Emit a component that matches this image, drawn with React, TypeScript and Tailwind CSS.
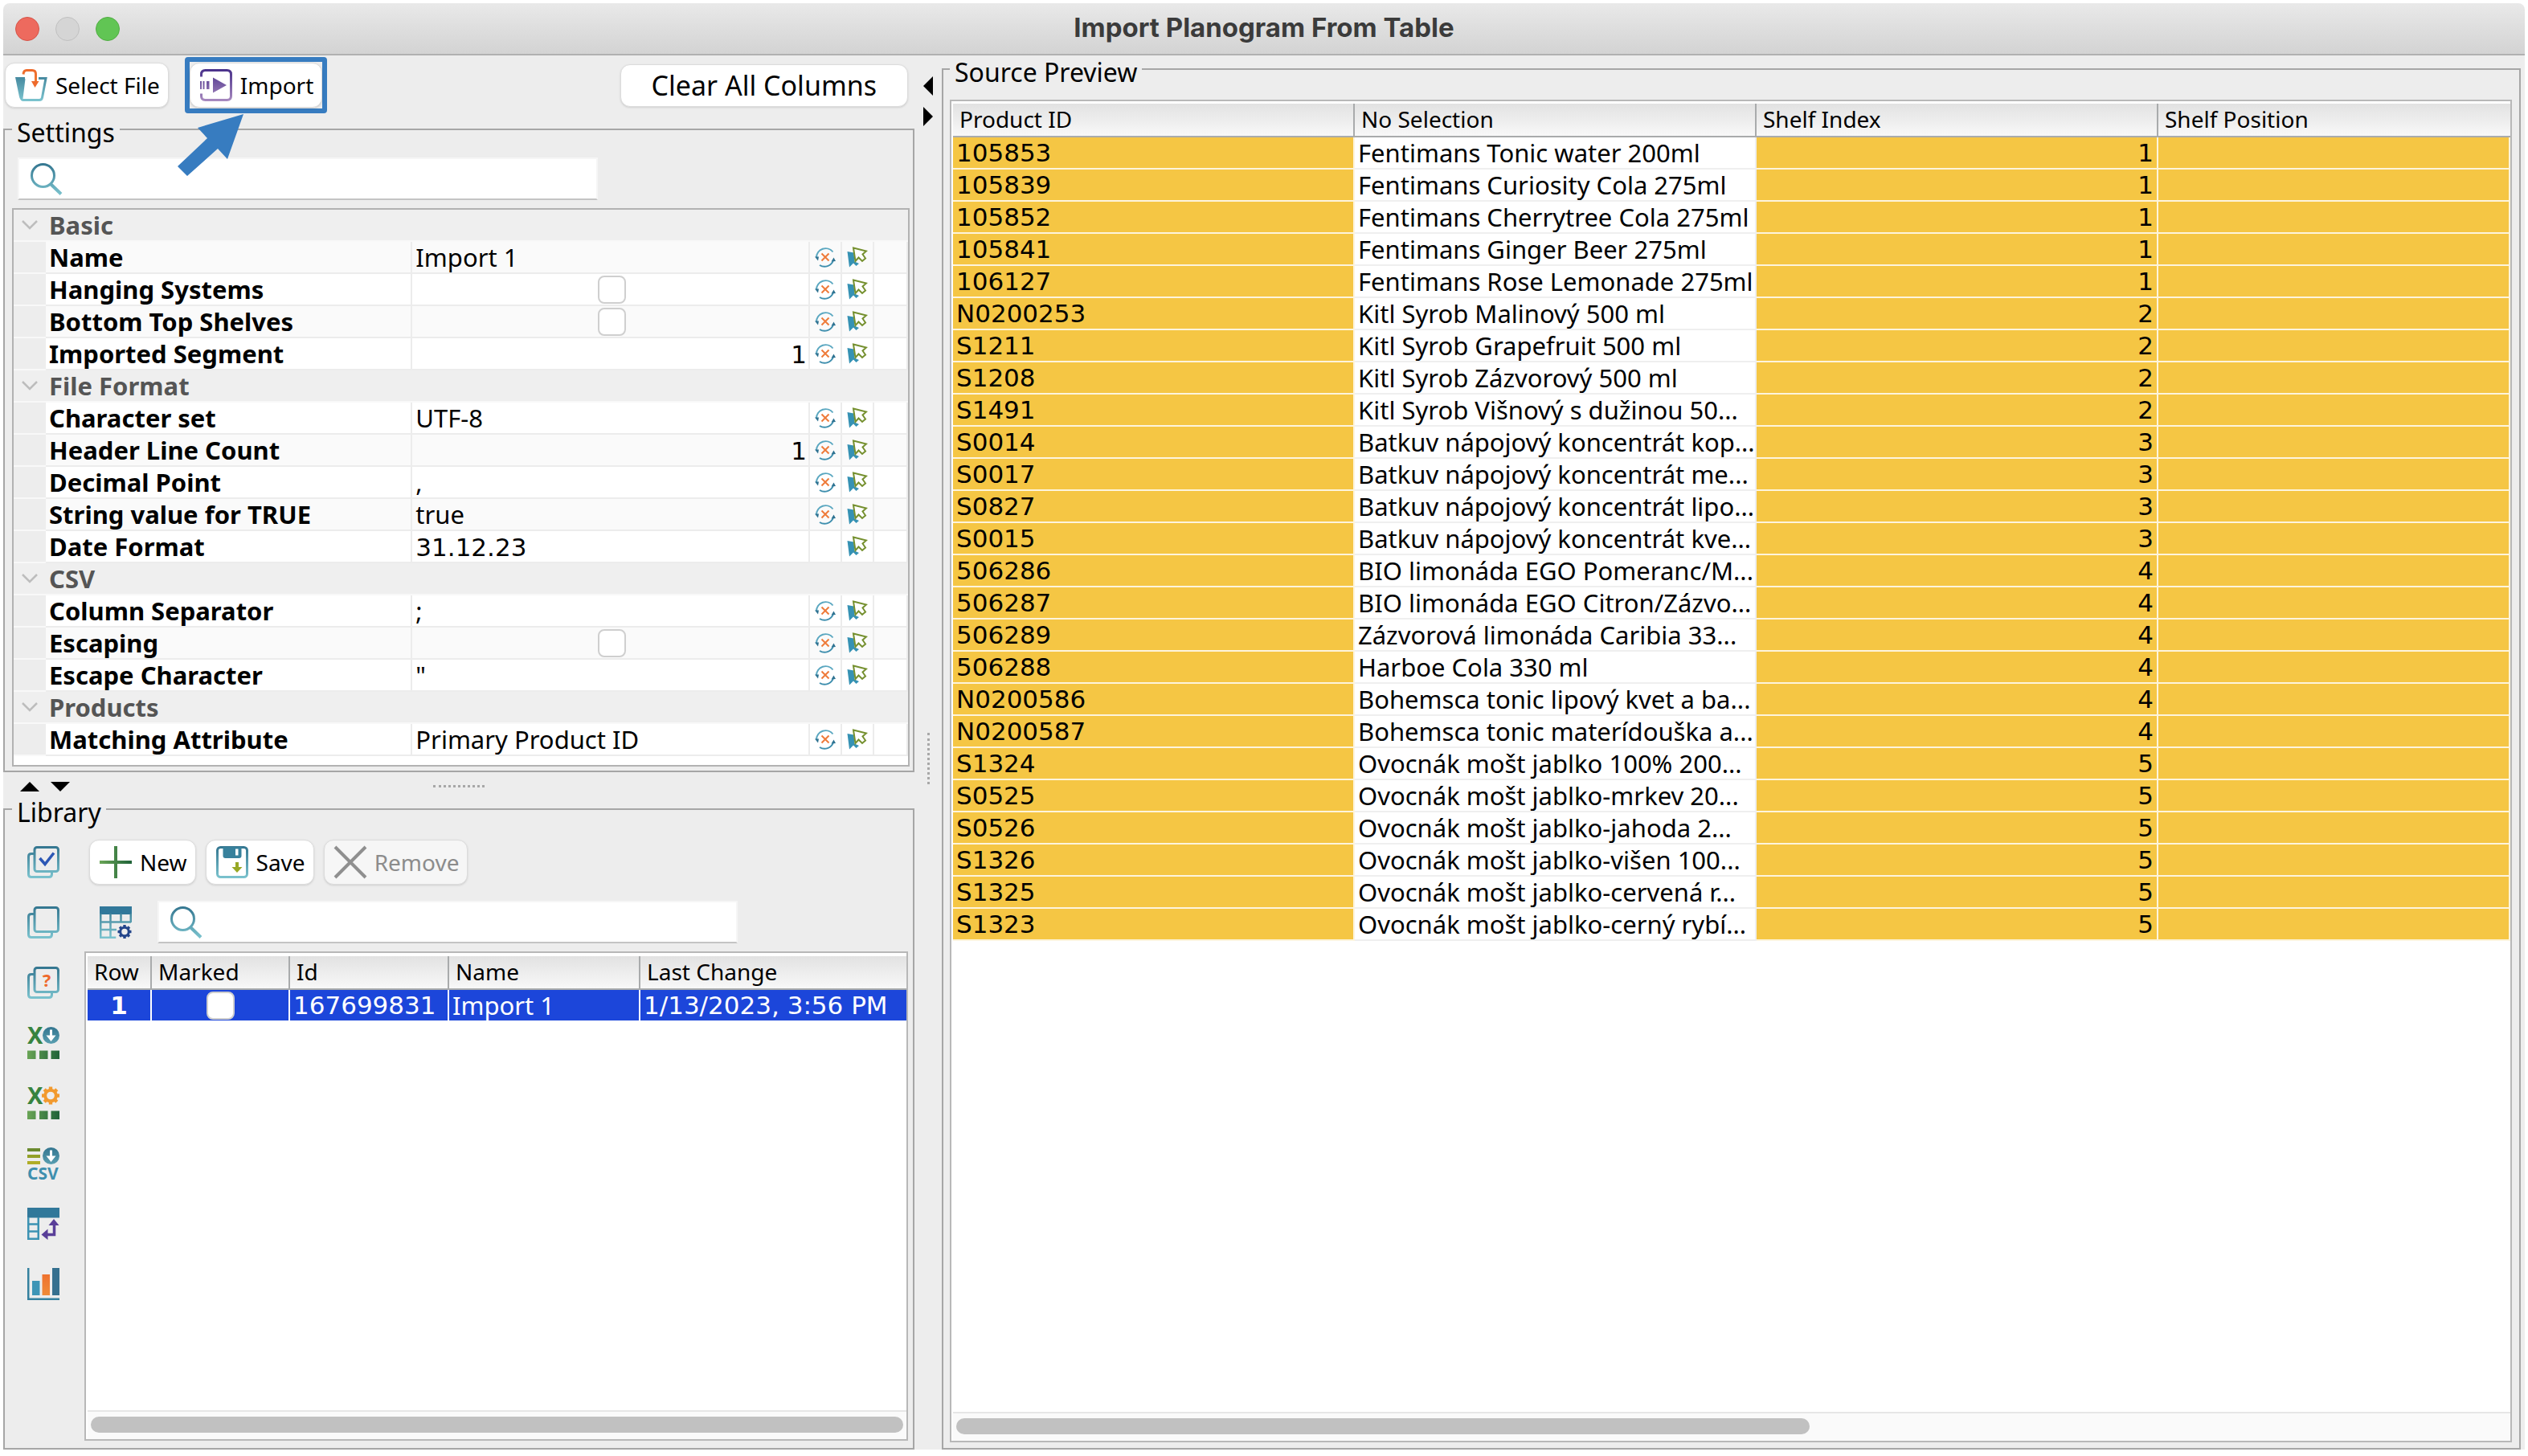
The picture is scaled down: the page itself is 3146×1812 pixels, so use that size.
import type { ReactNode } from "react";

type Prop = {
  label: string;
  value?: string;
  kind?: "group" | "text" | "number" | "check";
  noReset?: boolean;
};

const PROPS: Prop[] = [
  { label: "Basic", kind: "group" },
  { label: "Name", value: "Import 1" },
  { label: "Hanging Systems", kind: "check" },
  { label: "Bottom Top Shelves", kind: "check" },
  { label: "Imported Segment", value: "1", kind: "number" },
  { label: "File Format", kind: "group" },
  { label: "Character set", value: "UTF-8" },
  { label: "Header Line Count", value: "1", kind: "number" },
  { label: "Decimal Point", value: "," },
  { label: "String value for TRUE", value: "true" },
  { label: "Date Format", value: "31.12.23", noReset: true },
  { label: "CSV", kind: "group" },
  { label: "Column Separator", value: ";" },
  { label: "Escaping", kind: "check" },
  { label: "Escape Character", value: '"' },
  { label: "Products", kind: "group" },
  { label: "Matching Attribute", value: "Primary Product ID" },
];

const PRODUCTS: [string, string, number][] = [
  ["105853", "Fentimans Tonic water 200ml", 1],
  ["105839", "Fentimans Curiosity Cola 275ml", 1],
  ["105852", "Fentimans Cherrytree Cola 275ml", 1],
  ["105841", "Fentimans Ginger Beer 275ml", 1],
  ["106127", "Fentimans Rose Lemonade 275ml", 1],
  ["N0200253", "Kitl Syrob Malinový 500 ml", 2],
  ["S1211", "Kitl Syrob Grapefruit 500 ml", 2],
  ["S1208", "Kitl Syrob Zázvorový 500 ml", 2],
  ["S1491", "Kitl Syrob Višnový s dužinou 50...", 2],
  ["S0014", "Batkuv nápojový koncentrát kop...", 3],
  ["S0017", "Batkuv nápojový koncentrát me...", 3],
  ["S0827", "Batkuv nápojový koncentrát lipo...", 3],
  ["S0015", "Batkuv nápojový koncentrát kve...", 3],
  ["506286", "BIO limonáda EGO Pomeranc/M...", 4],
  ["506287", "BIO limonáda EGO Citron/Zázvo...", 4],
  ["506289", "Zázvorová limonáda Caribia 33...", 4],
  ["506288", "Harboe Cola 330 ml", 4],
  ["N0200586", "Bohemsca tonic lipový kvet a ba...", 4],
  ["N0200587", "Bohemsca tonic materídouška a...", 4],
  ["S1324", "Ovocnák mošt jablko 100% 200...", 5],
  ["S0525", "Ovocnák mošt jablko-mrkev 20...", 5],
  ["S0526", "Ovocnák mošt jablko-jahoda 2...", 5],
  ["S1326", "Ovocnák mošt jablko-višen 100...", 5],
  ["S1325", "Ovocnák mošt jablko-cervená r...", 5],
  ["S1323", "Ovocnák mošt jablko-cerný rybí...", 5],
];

// gradients shared by all icons
function Gradients() {
  const stops: [string, string, string, boolean][] = [
    ["teal", "#33758f", "#7cc4cf", false],
    ["green", "#6aa556", "#1f6238", true],
    ["purple", "#48308a", "#a98bc0", false],
    ["orange", "#ee6a2c", "#f0913a", false],
  ];
  return (
    <svg className="absolute size-0" aria-hidden="true">
      <defs>
        {stops.map(([id, from, to, across]) => (
          <linearGradient key={id} id={id} gradientUnits="userSpaceOnUse" x1="0" y1="0" x2={across ? 40 : 0} y2={across ? 0 : 40}>
            <stop offset="0" stopColor={from} />
            <stop offset="1" stopColor={to} />
          </linearGradient>
        ))}
      </defs>
    </svg>
  );
}

function Icon({ children }: { children: ReactNode }) {
  return (
    <svg viewBox="0 0 40 40" className="size-10 shrink-0 overflow-visible" fill="none" aria-hidden="true">
      {children}
    </svg>
  );
}

function SelectFileIcon() {
  return (
    <Icon>
      <path d="M0 10h12v3l-1.500 1 -2.500 24.500c-1.500-.5-2.500-1.500-3-4z" fill="url(#teal)" />
      <path d="M11 12l-3 24.500q-.3 2 2 2h20q3 0 3.500-3l4.500-24h-9" stroke="url(#teal)" strokeWidth="3" />
      <path d="M10 6.500q.5-5 4-5h7q4.500 0 4.500 4.500v11" stroke="url(#orange)" strokeWidth="3" />
      <path d="M20 15l4.500 8 5-8z" fill="#ee6a2c" />
    </Icon>
  );
}

function ImportIcon() {
  return (
    <Icon>
      <path d="M1.500 9.500v-3q0-5 5-5h27q5 0 5 5v27q0 5-5 5h-27q-5 0-5-5v-3" stroke="url(#purple)" strokeWidth="3" />
      <path d="M0 15h2v10h-2zM3.500 15h2v10h-2zM8 15h3.500v10h-3.500zM16 10.500l17 9.500-17 9.500z" fill="url(#purple)" />
    </Icon>
  );
}

function SearchIcon() {
  return (
    <Icon>
      <circle cx="15.500" cy="15.500" r="14" stroke="url(#teal)" strokeWidth="3" />
      <path d="M25 26l13 12.500" stroke="url(#teal)" strokeWidth="4" />
    </Icon>
  );
}

function PagesIcon({ mark }: { mark?: "check" | "question" }) {
  return (
    <Icon>
      <rect x="9" y="1.500" width="29.500" height="30" rx="3" stroke="url(#teal)" strokeWidth="3" />
      <path d="M8 9.500h-3q-3.500 0-3.500 3.500v22q0 3.500 3.500 3.500h22q3.500 0 3.500-3.500v-3" stroke="url(#teal)" strokeWidth="3" />
      {mark === "check" && <path d="M15.500 15l6.500 7.500 11-14" stroke="#2c57b5" strokeWidth="3.500" />}
      {mark === "question" && (
        <text x="24" y="25" textAnchor="middle" className="fill-[#ee6a2c] font-bold text-[22px]">
          ?
        </text>
      )}
    </Icon>
  );
}

function DownBadge() {
  return (
    <>
      <circle cx="29.500" cy="10.500" r="10.500" fill="url(#teal)" />
      <path d="M28 3.500h3v7h4.500l-6 7.500-6-7.500h4.500z" fill="#fff" />
    </>
  );
}

function Gear({ cx, cy, r, color }: { cx: number; cy: number; r: number; color: string }) {
  return (
    <g transform={`translate(${cx} ${cy})`}>
      <circle r={r * 0.62} stroke={color} strokeWidth={r * 0.36} />
      {[0, 45, 90, 135, 180, 225, 270, 315].map((a) => (
        <rect key={a} x={-r * 0.2} y={-r} width={r * 0.4} height={r * 0.34} fill={color} transform={`rotate(${a})`} />
      ))}
    </g>
  );
}

function ExcelIcon({ gear }: { gear?: boolean }) {
  return (
    <Icon>
      <text x="0" y="21" className="fill-[#37833f] font-bold text-[29px]">
        X
      </text>
      {gear ? <Gear cx={29} cy={10.5} r={11} color="#f29a2e" /> : <DownBadge />}
      <path d="M0 29.500h10.500v10.500h-10.500zM15 29.500h10.500v10.500h-10.500zM29.500 29.500h10.500v10.500h-10.500z" fill="url(#green)" />
    </Icon>
  );
}

function CsvIcon() {
  return (
    <Icon>
      <rect y="1" width="16" height="4" fill="#6b8a2f" />
      <rect y="9" width="16" height="4" fill="#93a028" />
      <rect y="17" width="16" height="4" fill="#b0ad26" />
      <DownBadge />
      <text x="0" y="40" className="fill-[#3f8fae] font-bold text-[21px]">
        CSV
      </text>
    </Icon>
  );
}

function PivotIcon() {
  return (
    <Icon>
      <path d="M0 0h40v12.500h-40z" fill="#31789a" />
      <path d="M1.250 12v26.750h12.500v-26.750M1 20.500h13M1 29.500h13" stroke="#3d93b3" strokeWidth="2.500" />
      <path d="M33.500 21v12.500h-9" stroke="#5a3f99" strokeWidth="3.500" />
      <path d="M26.500 22l6.500-8 6.500 8zM25.500 26.500v13.500l-8-6.500z" fill="#5a3f99" />
    </Icon>
  );
}

function ChartIcon() {
  return (
    <Icon>
      <path d="M1.250 0v38.750h38.750" stroke="#35819f" strokeWidth="2.500" />
      <path d="M6 16h9.500v18h-9.500z" fill="#3e95b6" />
      <path d="M18.500 8h9.500v26h-9.500z" fill="url(#orange)" />
      <path d="M31 0h9v34h-9z" fill="#35708f" />
    </Icon>
  );
}

function TableGearIcon() {
  return (
    <Icon>
      <path d="M0 0h40v10h-40z" fill="#31789a" />
      <path d="M1.250 9v29.750h19M1 19.500h38M1 29h20M13.500 9v30M26.500 9v11M38.750 9v11" stroke="url(#teal)" strokeWidth="2.500" />
      <Gear cx={31} cy={31.5} r={8.5} color="#24468b" />
    </Icon>
  );
}

function SaveIcon() {
  return (
    <Icon>
      <rect x="1.500" y="1.500" width="37" height="37" rx="4" stroke="url(#teal)" strokeWidth="3" />
      <path d="M8.500 1h23v11q0 3-3 3h-17q-3 0-3-3z" fill="#38819c" />
      <path d="M24 3.500h3.500v8h-3.500z" fill="#fff" />
      <path d="M24 20h4v6h4.500l-6.500 7-6.500-7h4.500z" fill="#97a825" />
    </Icon>
  );
}

function ResetIcon() {
  return (
    <svg viewBox="0 0 26 26" className="size-[26px]" fill="none" aria-hidden="true">
      <path d="M22.500 6.500a11.500 11.500 0 0 0-20.500 7" stroke="#5aa7c0" strokeWidth="2" />
      <path d="M6 23a11.500 11.500 0 0 0 17-6" stroke="#3f8fae" strokeWidth="2" />
      <path d="M0 12.500h5l-1 5zM20.500 18.500l3-5 2.500 4.500z" fill="#2f7392" />
      <path d="M8.500 8.500l9 9M17.500 8.500l-9 9" stroke="#ee7b3a" strokeWidth="2" />
    </svg>
  );
}

function CursorIcon() {
  return (
    <svg viewBox="0 0 26 26" className="size-[26px]" fill="none" aria-hidden="true">
      <path d="M0.500 6l8 1.500 1 11 5.500 2.500-3.500 3-3.500-3.500-5 5z" fill="#3692b4" />
      <path d="M8 1.500l16 4-4.500 4 3.500 5-4 3.500-4.500-4.500-4 4.500z" fill="#fff" stroke="#75902f" strokeWidth="2" />
    </svg>
  );
}

function Panel({ title, className, children }: { title: string; className: string; children: ReactNode }) {
  return (
    <fieldset className={`flex min-w-0 flex-col border-2 border-[#a6a6a6] ${className}`}>
      <legend className="px-[6px] pt-2 text-[32px] leading-[26px]">{title}</legend>
      {children}
    </fieldset>
  );
}

function ToolButton({ icon, label, disabled }: { icon: ReactNode; label: string; disabled?: boolean }) {
  return (
    <button
      disabled={disabled}
      className="flex h-14 items-center gap-[10px] rounded-xl border border-[#dcdcdc] bg-white pr-[10px] pl-3 text-[28px] shadow-sm disabled:bg-[#f6f6f6] disabled:text-[#8c8c8c]"
    >
      {icon}
      {label}
    </button>
  );
}

function SearchBox({ label }: { label: string }) {
  return (
    <label className="flex h-[53px] w-full max-w-[722px] items-center border-2 border-[#f6f6f6] border-b-[#c4c4c4] bg-white pl-[14px]">
      <SearchIcon />
      <input type="search" aria-label={label} className="h-full min-w-0 flex-1 px-3 text-[31px] outline-none" />
    </label>
  );
}

function CheckBox({ label }: { label: string }) {
  return (
    <input
      type="checkbox"
      aria-label={label}
      className="mx-auto block size-[35px] appearance-none rounded-lg border-2 border-[#cfcfcf] bg-white"
    />
  );
}

function PropertyRow({ prop, odd }: { prop: Prop; odd: boolean }) {
  if (prop.kind === "group") {
    return (
      <tr className="h-10">
        <td className="border-b-2 border-[#f8f8f8] bg-[#efefef]">
          <svg viewBox="0 0 20 12" className="mx-auto w-5" fill="none" aria-hidden="true">
            <path d="M1 1l9 9 9-9" stroke="#bdbdbd" strokeWidth="2.500" />
          </svg>
        </td>
        <th colSpan={5} className="border-b-2 border-[#f8f8f8] bg-[#efefef] pl-1 text-left text-[#555]">
          {prop.label}
        </th>
      </tr>
    );
  }
  const cell = "border-r-2 border-b-2 border-[#ececec]";
  return (
    <tr className={odd ? "h-10 bg-[#fafafa]" : "h-10 bg-white"}>
      <td className="border-b-2 border-[#f8f8f8] bg-[#ededed]" />
      <th className={`${cell} pl-1 text-left`}>{prop.label}</th>
      <td className={`${cell} pl-1 ${prop.kind === "number" ? "pr-0.5 text-right" : ""}`}>
        {prop.kind === "check" ? (
          <CheckBox label={prop.label} />
        ) : (
          <span className={/^[\d.]+$/.test(prop.value ?? "") ? "font-['DejaVu_Sans',sans-serif]" : ""}>{prop.value}</span>
        )}
      </td>
      <td className={cell}>
        {!prop.noReset && (
          <button aria-label={`Reset ${prop.label}`} className="mx-auto block">
            <ResetIcon />
          </button>
        )}
      </td>
      <td className={cell}>
        <button aria-label={`Pick ${prop.label}`} className="mx-auto block">
          <CursorIcon />
        </button>
      </td>
      <td className={cell} />
    </tr>
  );
}

function HeadCell({ children }: { children: ReactNode }) {
  return (
    <th className="border-r-2 border-b-2 border-[#a9abac] bg-linear-to-b from-[#e2e2e2] to-[#f8f8f8] pb-0.5 pl-2 text-left text-[28px] leading-[36px] font-normal last:border-r-0">
      {children}
    </th>
  );
}

function ScrollBar({ wide }: { wide: boolean }) {
  return (
    <div className="mt-auto h-9 border-t-2 border-[#e6e6e6] bg-[#fafafa] px-1 pt-1.5">
      <div className={wide ? "h-5 rounded-full bg-[#c1c1c1]" : "h-5 w-[55%] rounded-full bg-[#c1c1c1]"} />
    </div>
  );
}

function TitleBar() {
  return (
    <header className="grid h-[65px] grid-cols-[1fr_auto_1fr] items-center rounded-t-lg border-b-2 border-[#b1b1b1] bg-linear-to-b from-[#e9e9e9] to-[#d3d3d3]">
      <div className="flex gap-5 pl-[15px]">
        <button aria-label="Close" className="size-[30px] rounded-full border border-[#d65448] bg-[#ed6a5e]" />
        <button aria-label="Minimize" className="size-[30px] rounded-full border border-[#c0c0c0] bg-[#d5d5d5]" />
        <button aria-label="Zoom" className="size-[30px] rounded-full border border-[#51ad43] bg-[#61c554]" />
      </div>
      <h1 className="pb-1 font-['Inter',sans-serif] text-[33px] leading-[40px] font-bold text-[#3b3b3b]">
        Import Planogram From Table
      </h1>
    </header>
  );
}

function Settings() {
  return (
    <Panel title="Settings" className="pr-1 pb-[5px] pl-[9px]">
      <div className="mt-[18px] pl-[7px]">
        <SearchBox label="Search settings" />
      </div>
      <div className="mt-2.5 border-2 border-[#b2b2b2] bg-white pb-[11px]">
        <table className="w-full table-fixed border-separate border-spacing-0 text-[31px] leading-[36px]">
          <colgroup>
            <col className="w-10" />
            <col className="w-[41%]" />
            <col />
            <col className="w-10" />
            <col className="w-10" />
            <col className="w-[42px]" />
          </colgroup>
          <tbody>
            {PROPS.map((p, i) => (
              <PropertyRow key={p.label} prop={p} odd={i % 2 === 1} />
            ))}
          </tbody>
        </table>
      </div>
    </Panel>
  );
}

function Library() {
  const cell = "border-r-2 border-b-2 border-white last:border-r-0 px-1";
  return (
    <Panel title="Library" className="flex-1 pr-1.5 pb-[9px] pl-[9px]">
      <div className="flex flex-1">
        <nav className="flex w-[90px] shrink-0 flex-col gap-[35px] pt-[29px] pl-[19px]">
          <button aria-label="Mark all"><PagesIcon mark="check" /></button>
          <button aria-label="Unmark all"><PagesIcon /></button>
          <button aria-label="Invert marked"><PagesIcon mark="question" /></button>
          <button aria-label="Export to Excel"><ExcelIcon /></button>
          <button aria-label="Excel settings"><ExcelIcon gear /></button>
          <button aria-label="Export to CSV"><CsvIcon /></button>
          <button aria-label="Pivot table"><PivotIcon /></button>
          <button aria-label="Chart"><ChartIcon /></button>
        </nav>
        <div className="flex min-w-0 flex-1 flex-col pt-[21px]">
          <div className="flex gap-3 pl-1.5">
            <ToolButton
              label="New"
              icon={
                <Icon>
                  <path d="M20 0v40M0 20h40" stroke="url(#green)" strokeWidth="4" />
                </Icon>
              }
            />
            <ToolButton label="Save" icon={<SaveIcon />} />
            <ToolButton
              label="Remove"
              disabled
              icon={
                <Icon>
                  <path d="M1 1l38 38M39 1l-38 38" stroke="#8f8f8f" strokeWidth="4" />
                </Icon>
              }
            />
          </div>
          <div className="mt-5 flex items-center gap-8 pl-[19px]">
            <button aria-label="Table settings"><TableGearIcon /></button>
            <SearchBox label="Search library" />
          </div>
          <div className="mt-2.5 flex flex-1 flex-col border-2 border-[#b8b8b8] bg-white pt-1 pl-0.5">
            <table className="w-full table-fixed border-separate border-spacing-0 text-[31px] leading-[36px]">
              <colgroup>
                <col className="w-[80px]" />
                <col className="w-[172px]" />
                <col className="w-[198px]" />
                <col className="w-[238px]" />
                <col />
              </colgroup>
              <thead>
                <tr className="h-[42px]">
                  <HeadCell>Row</HeadCell>
                  <HeadCell>Marked</HeadCell>
                  <HeadCell>Id</HeadCell>
                  <HeadCell>Name</HeadCell>
                  <HeadCell>Last Change</HeadCell>
                </tr>
              </thead>
              <tbody>
                <tr className="h-10 bg-[#1c46da] text-white">
                  <td className={`${cell} text-center font-['DejaVu_Sans',sans-serif] font-bold`}>1</td>
                  <td className={cell}>
                    <CheckBox label="Marked" />
                  </td>
                  <td className={`${cell} font-['DejaVu_Sans',sans-serif]`}>167699831</td>
                  <td className={cell}>Import 1</td>
                  <td className={`${cell} font-['DejaVu_Sans',sans-serif] whitespace-nowrap`}>1/13/2023, 3:56 PM</td>
                </tr>
              </tbody>
            </table>
            <ScrollBar wide />
          </div>
        </div>
      </div>
    </Panel>
  );
}

function SourcePreview() {
  const filled = "border-r-2 border-b-2 border-[#fdf4dc] bg-[#f5c644] px-1 font-['DejaVu_Sans',sans-serif]";
  return (
    <Panel title="Source Preview" className="pr-[9px] pb-[7px] pl-2">
      <div className="mt-[21px] flex flex-1 flex-col border-2 border-[#b8b8b8] bg-white pt-[3px] pl-0.5">
        <table className="w-full table-fixed border-separate border-spacing-0 text-[31px] leading-[36px]">
          <colgroup>
            <col className="w-[500px]" />
            <col className="w-[500px]" />
            <col className="w-[500px]" />
            <col />
          </colgroup>
          <thead>
            <tr className="h-[42px]">
              <HeadCell>Product ID</HeadCell>
              <HeadCell>No Selection</HeadCell>
              <HeadCell>Shelf Index</HeadCell>
              <HeadCell>Shelf Position</HeadCell>
            </tr>
          </thead>
          <tbody>
            {PRODUCTS.map(([id, name, shelf]) => (
              <tr key={id} className="h-10">
                <td className={filled}>{id}</td>
                <td className="border-r-2 border-b-2 border-[#efefef] pl-1 whitespace-nowrap">{name}</td>
                <td className={`${filled} text-right`}>{shelf}</td>
                <td className={`${filled} border-r-0`} />
              </tr>
            ))}
          </tbody>
        </table>
        <ScrollBar wide={false} />
      </div>
    </Panel>
  );
}

export default function App() {
  return (
    <div className="flex min-h-screen flex-col bg-white px-1 pt-1 pb-2 font-['Noto_Sans',sans-serif] text-black">
      <Gradients />
      <TitleBar />
      <main className="grid flex-1 grid-cols-[1134fr_34px_1965fr] bg-[#ededed] pr-[5px]">
        <div className="flex min-w-0 flex-col">
          <div className="flex h-[75px] items-center pt-0.5 pb-[3px] pl-0.5">
            <ToolButton label="Select File" icon={<SelectFileIcon />} />
            <div className="relative ml-5 rounded border-6 border-[#377cc0] py-px">
              <ToolButton label="Import" icon={<ImportIcon />} />
              {/* callout arrow pointing at Import */}
              <svg viewBox="0 0 84 80" className="absolute top-[65px] -left-[15px] w-[84px]" aria-hidden="true">
                <path d="M82 0L62 56 50 43 12 77 0 65 37 30 25 17z" fill="#377cc0" />
              </svg>
            </div>
            <button className="mr-2 ml-auto h-[53px] rounded-xl border border-[#dcdcdc] bg-white px-[38px] text-[34px] leading-[48px] shadow-sm">
              Clear All Columns
            </button>
          </div>
          <Settings />
          <div className="flex h-[29px] items-center pt-1.5 pr-[83px] pl-[21px]">
            <button aria-label="Collapse settings">
              <svg viewBox="0 0 24 12" className="block w-6"><path d="M0 12L12 0l12 12z" /></svg>
            </button>
            <button aria-label="Collapse library" className="ml-[14px]">
              <svg viewBox="0 0 24 12" className="block w-6"><path d="M0 0h24L12 12z" /></svg>
            </button>
            <div className="mx-auto h-[3px] w-16 border-t-3 border-dotted border-[#a8a8a8]" />
          </div>
          <Library />
        </div>
        <div className="flex flex-col items-center gap-[14px] pt-[26px] pb-[88px]">
          <button aria-label="Collapse left">
            <svg viewBox="0 0 12 24" className="block w-3"><path d="M12 0v24L0 12z" /></svg>
          </button>
          <button aria-label="Collapse right">
            <svg viewBox="0 0 12 24" className="block w-3"><path d="M0 0v24l12-12z" /></svg>
          </button>
          <div className="my-auto h-16 w-[3px] border-l-3 border-dotted border-[#a8a8a8]" />
        </div>
        <SourcePreview />
      </main>
    </div>
  );
}
